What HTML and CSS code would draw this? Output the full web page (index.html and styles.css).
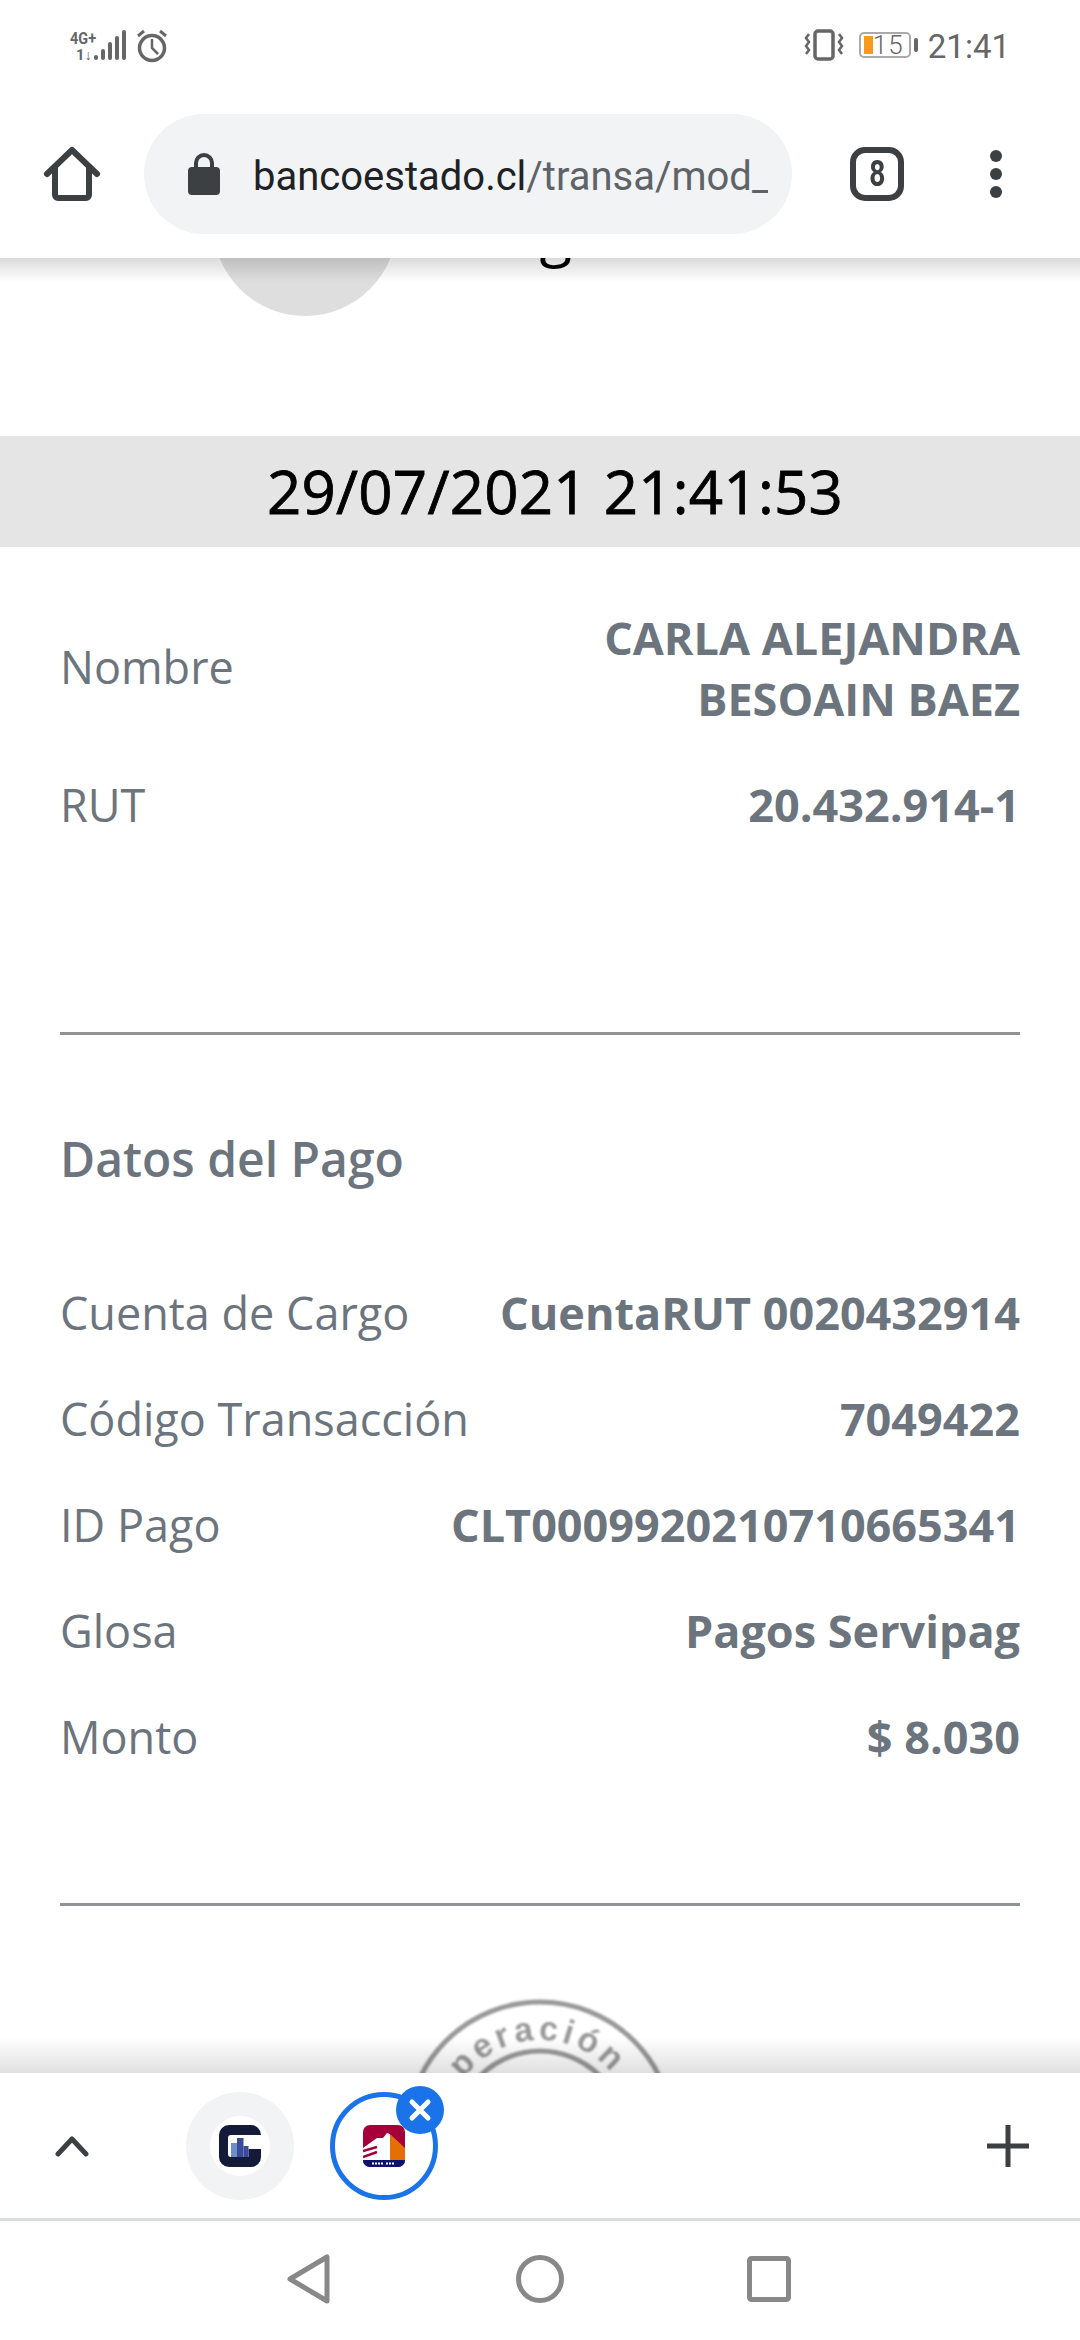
FILE: index.html
```html
<!DOCTYPE html>
<html lang="es">
<head>
    <meta charset="UTF-8">
    <meta name="viewport" content="width=device-width, initial-scale=1.0">
    <title>BancoEstado - Comprobante</title>
    <link rel="stylesheet" href="styles.css">
</head>
<body>

    <!-- Barra de estado + barra del navegador -->
    <header class="browser-top">
        <div class="status-bar">
            <div class="status-left">
                <svg class="icon-signal" width="60" height="32" viewBox="0 0 60 32">
                    <text x="2" y="15" class="net-text" textLength="26" lengthAdjust="spacingAndGlyphs">4G+</text>
                    <text x="8" y="31" class="net-text small" textLength="16" lengthAdjust="spacingAndGlyphs">1↓</text>
                    <g fill="#666">
                        <rect x="26" y="26" width="4" height="5" rx="2"/>
                        <rect x="33" y="20" width="4" height="11" rx="2"/>
                        <rect x="40" y="13" width="4" height="18" rx="2"/>
                        <rect x="47" y="7" width="4" height="24" rx="2"/>
                        <rect x="54" y="1" width="4" height="30" rx="2"/>
                    </g>
                </svg>
                <svg width="32" height="34" viewBox="0 0 32 34" fill="none" stroke="#666">
                    <circle cx="16" cy="19" r="12.5" stroke-width="3.5"/>
                    <path d="M16 10v9l6 6" stroke-width="2.5"/>
                    <path d="M2 7l6-5M30 7l-6-5" stroke-width="3"/>
                </svg>
            </div>
            <div class="status-right">
                <svg width="40" height="32" viewBox="0 0 40 32" fill="none" stroke="#666">
                    <rect x="11" y="2" width="18" height="28" rx="3" stroke-width="3.5"/>
                    <path d="M5 5l-3 4 3 4-3 4 3 4-3 4M35 5l3 4-3 4 3 4-3 4 3 4" stroke-width="2.5"/>
                </svg>
                <div class="battery">
                    <span class="battery-level"></span>
                    <span class="battery-num">15</span>
                </div>
                <span class="battery-tip"></span>
                <span class="clock">21:41</span>
            </div>
        </div>
        <div class="toolbar">
            <svg class="icon-home" width="60" height="60" viewBox="0 0 60 60" fill="none" stroke="#3c4043" stroke-width="6" stroke-linecap="round" stroke-linejoin="round">
                <path d="M5 30L30 6l25 24"/>
                <path d="M13 24v27a3 3 0 0 0 3 3h28a3 3 0 0 0 3-3V24"/>
            </svg>
            <div class="url-bar">
                <svg width="32" height="42" viewBox="0 0 32 42">
                    <path d="M8 16V10a8 8 0 0 1 16 0v6" fill="none" stroke="#3c4043" stroke-width="4"/>
                    <rect x="0" y="14" width="32" height="28" rx="4" fill="#3c4043"/>
                </svg>
                <div class="url-text"><span class="url-host">bancoestado.cl</span><span class="url-path">/transa/mod_</span></div>
            </div>
            <div class="tab-count"><span>8</span></div>
            <svg class="icon-menu" width="12" height="48" viewBox="0 0 12 48" fill="#3c4043">
                <circle cx="6" cy="6" r="6"/>
                <circle cx="6" cy="24" r="6"/>
                <circle cx="6" cy="42" r="6"/>
            </svg>
        </div>
    </header>

    <!-- Contenido de la pagina -->
    <main class="page">
        <div class="hero">
            <div class="hero-circle"></div>
            <div class="hero-title">Pago</div>
        </div>

        <div class="date-band">29/07/2021 21:41:53</div>

        <section class="section first">
            <div class="row">
                <span class="label lifted">Nombre</span>
                <span class="value">CARLA ALEJANDRA<br>BESOAIN BAEZ</span>
            </div>
            <div class="row">
                <span class="label">RUT</span>
                <span class="value">20.432.914-1</span>
            </div>
        </section>

        <hr class="divider gap-large">

        <section class="section second">
            <h2>Datos del Pago</h2>
            <div class="row">
                <span class="label">Cuenta de Cargo</span>
                <span class="value">CuentaRUT 0020432914</span>
            </div>
            <div class="row">
                <span class="label">Código Transacción</span>
                <span class="value">7049422</span>
            </div>
            <div class="row">
                <span class="label">ID Pago</span>
                <span class="value">CLT0009920210710665341</span>
            </div>
            <div class="row">
                <span class="label">Glosa</span>
                <span class="value">Pagos Servipag</span>
            </div>
            <div class="row">
                <span class="label">Monto</span>
                <span class="value">$ 8.030</span>
            </div>
        </section>

        <hr class="divider gap-small">

        <svg class="stamp" width="276" height="276" viewBox="0 0 276 276" fill="none" stroke="#999">
            <defs>
                <path id="stampArc" d="M43 138a95 95 0 0 1 190 0"/>
            </defs>
            <circle cx="138" cy="138" r="133" stroke-width="5"/>
            <circle cx="138" cy="138" r="84" stroke-width="5"/>
            <text class="stamp-text"><textPath href="#stampArc" startOffset="44%" text-anchor="middle">Operación</textPath></text>
        </svg>
    </main>

    <!-- Pestañas -->
    <div class="tab-strip">
        <svg class="icon-chevron" width="36" height="22" viewBox="0 0 36 22" fill="none" stroke="#3c4043" stroke-width="5" stroke-linecap="round" stroke-linejoin="round">
            <path d="M4 19L18 4l14 15"/>
        </svg>
        <div class="tab">
            <span class="tab-inner">
                <svg width="42" height="42" viewBox="0 0 42 42">
                    <rect width="42" height="42" rx="10" fill="#141a3a"/>
                    <path d="M42 10H12a3 3 0 0 0-3 3v16a3 3 0 0 0 3 3h17.500V24H42z" fill="#fff"/>
                    <rect x="12" y="18" width="6" height="14" fill="#6b8fc9"/>
                    <rect x="18" y="13" width="6.500" height="19" fill="#3c4a9a"/>
                    <rect x="24.500" y="21" width="5" height="11" fill="#3c4a9a"/>
                </svg>
            </span>
        </div>
        <div class="tab active">
            <svg width="42" height="42" viewBox="0 0 42 42">
                <rect width="42" height="42" rx="7" fill="#a5003a"/>
                <path d="M27 9l15 14v13H27z" fill="#e36f05"/>
                <path d="M27 9v27H0V23l14-10h6l4-5z" fill="#fff"/>
                <path d="M0 26l14-4M0 32l14-5" stroke="#a5003a" stroke-width="2.500"/>
                <path d="M0 35h42a7 7 0 0 1-7 7H7a7 7 0 0 1-7-7z" fill="#0c1470"/>
                <path d="M9 38.500h11M23 38.500h9" stroke="#fff" stroke-width="2" stroke-dasharray="2 1"/>
            </svg>
            <span class="tab-close">
                <svg width="24" height="24" viewBox="0 0 24 24" fill="none" stroke="#fff" stroke-width="5" stroke-linecap="round">
                    <path d="M4 4l16 16M20 4L4 20"/>
                </svg>
            </span>
        </div>
        <svg class="icon-plus" width="42" height="42" viewBox="0 0 42 42" fill="#3c4043">
            <rect x="18.500" y="0" width="5" height="42"/>
            <rect x="0" y="18.500" width="42" height="5"/>
        </svg>
    </div>

    <!-- Navegacion de Android -->
    <nav class="nav-bar">
        <svg class="nav-back" width="44" height="50" viewBox="0 0 44 50" fill="none" stroke="#888" stroke-width="5" stroke-linejoin="round">
            <path d="M40 3v44L3 25z"/>
        </svg>
        <svg class="nav-home" width="48" height="48" viewBox="0 0 48 48" fill="none" stroke="#888" stroke-width="5">
            <circle cx="24" cy="24" r="21.500"/>
        </svg>
        <svg class="nav-recent" width="44" height="46" viewBox="0 0 44 46" fill="none" stroke="#888" stroke-width="5" stroke-linejoin="round">
            <rect x="2.500" y="2.500" width="39" height="41" rx="2"/>
        </svg>
    </nav>

</body>
</html>
```

FILE: styles.css
```css
* {
    box-sizing: border-box;
}

html, body {
    margin: 0;
    padding: 0;
}

body {
    width: 1080px;
    height: 2340px;
    overflow: hidden;
    display: flex;
    flex-direction: column;
    background-color: #fff;
    font-family: "Open Sans", sans-serif;
}

/* Barra superior */
.browser-top {
    height: 258px;
    background-color: #fff;
    flex-shrink: 0;
}

.status-bar {
    height: 114px;
    display: flex;
    justify-content: space-between;
    padding: 29px 70px 0 68px;
}

.status-left,
.status-right {
    display: flex;
    align-items: flex-start;
}

.status-left {
    gap: 8px;
}

.net-text {
    font-family: Roboto, sans-serif;
    font-weight: 700;
    font-size: 17px;
    fill: #666;
}

.net-text.small {
    font-size: 14px;
}

.status-right {
    color: #666;
}

.battery {
    width: 52px;
    height: 26px;
    margin: 3px 0 0 15px;
    border: 2px solid #aaa;
    border-radius: 5px;
    display: flex;
    align-items: center;
    padding-left: 3px;
}

.battery-level {
    width: 9px;
    height: 18px;
    background-color: #f89a1c;
}

.battery-num {
    font-family: Roboto, sans-serif;
    font-size: 26px;
    line-height: 22px;
    letter-spacing: 1px;
    font-weight: 300;
}

.battery-tip {
    width: 4px;
    height: 14px;
    margin: 9px 0 0 3px;
    background-color: #666;
    border-radius: 2px;
}

.clock {
    font-family: Roboto, sans-serif;
    font-size: 33px;
    line-height: 36px;
    margin-left: 10px;
}

.toolbar {
    height: 144px;
    display: flex;
    align-items: flex-start;
    padding-left: 42px;
}

.icon-home {
    margin-top: 30px;
}

.url-bar {
    width: 648px;
    height: 120px;
    margin-left: 42px;
    border-radius: 60px;
    background-color: #f1f3f4;
    display: flex;
    align-items: center;
    padding-left: 44px;
}

.url-text {
    width: 515px;
    margin-left: 33px;
    padding-top: 5px;
    overflow: hidden;
    white-space: nowrap;
    font-family: Roboto, sans-serif;
    font-size: 40px;
}

.url-host {
    color: #202124;
}

.url-path {
    color: #5f6368;
}

.tab-count {
    width: 54px;
    height: 54px;
    margin: 33px 0 0 58px;
    border: 6px solid #3c4043;
    border-radius: 15px;
    display: flex;
    align-items: center;
    justify-content: center;
    font-family: Roboto, sans-serif;
    font-weight: 700;
    font-size: 36px;
    line-height: 36px;
    color: #3c4043;
}

.tab-count span {
    display: inline-block;
    transform: scaleX(0.78);
}

.icon-menu {
    margin: 36px 0 0 86px;
}

/* Pagina */
.page {
    flex: 1;
    min-height: 0;
    position: relative;
    overflow: hidden;
    background-color: #fff;
}

.page::before,
.page::after {
    content: "";
    position: absolute;
    left: 0;
    width: 100%;
    z-index: 2;
}

.page::before {
    top: 0;
    height: 24px;
    background: linear-gradient(rgba(0, 0, 0, 0.14), rgba(0, 0, 0, 0));
}

.page::after {
    bottom: 0;
    height: 36px;
    background: linear-gradient(rgba(0, 0, 0, 0), rgba(0, 0, 0, 0.12));
}

.hero {
    height: 178px;
    display: flex;
    align-items: flex-start;
    padding-left: 213px;
}

.hero-circle {
    width: 184px;
    height: 184px;
    margin-top: -126px;
    border-radius: 50%;
    background-color: #dedede;
    flex-shrink: 0;
}

.hero-title {
    margin: -69px 0 0 73px;
    font-size: 60px;
    line-height: 87px;
    color: #000;
}

.date-band {
    height: 111px;
    background-color: #e5e5e5;
    color: #000;
    font-size: 60px;
    line-height: 111px;
    letter-spacing: 0.25px;
    -webkit-text-stroke: 0.8px #000;
    text-align: center;
    padding-left: 30px;
}

.section {
    padding: 0 60px;
}

.section.first {
    padding-top: 60px;
}

.section.second {
    padding-top: 93px;
}

.section h2 {
    margin: 0 0 93px;
    font-size: 48px;
    font-weight: 600;
    line-height: 61px;
    color: #6c757d;
}

.row {
    display: flex;
    justify-content: space-between;
    align-items: center;
    margin-bottom: 45px;
    font-size: 45px;
    line-height: 61px;
    color: #6c757d;
}

.label.lifted {
    padding-bottom: 3px;
}

.value {
    font-weight: 700;
    text-align: right;
}

.divider {
    height: 3px;
    margin: 0 60px;
    border: none;
    background-color: #8f9396;
}

.divider.gap-large {
    margin-top: 197px;
}

.divider.gap-small {
    margin-top: 136px;
}

.stamp {
    display: block;
    margin: 91px auto 0;
    filter: blur(0.8px);
}

.stamp-text {
    font-family: "Liberation Sans", sans-serif;
    font-weight: 700;
    font-size: 34px;
    letter-spacing: 4px;
    fill: #999;
    stroke: none;
}

/* Pestañas */
.tab-strip {
    height: 145px;
    flex-shrink: 0;
    display: flex;
    align-items: center;
    padding: 0 51px 0 54px;
    background-color: #fff;
}

.icon-chevron {
    margin-right: 96px;
}

.tab {
    width: 108px;
    height: 108px;
    border-radius: 50%;
    background-color: #f1f3f4;
    display: flex;
    align-items: center;
    justify-content: center;
    position: relative;
    margin-right: 36px;
}

.tab-inner {
    width: 60px;
    height: 60px;
    border-radius: 50%;
    background-color: #fff;
    display: flex;
    align-items: center;
    justify-content: center;
}

.tab.active {
    background-color: #fff;
    border: 5px solid #1a73e8;
}

.tab-close {
    position: absolute;
    top: -11px;
    right: -11px;
    width: 48px;
    height: 48px;
    border-radius: 50%;
    background-color: #1a73e8;
    display: flex;
    align-items: center;
    justify-content: center;
}

.icon-plus {
    margin-left: auto;
}

/* Navegacion */
.nav-bar {
    height: 122px;
    flex-shrink: 0;
    border-top: 3px solid #dadce0;
    background-color: #fff;
    display: flex;
    align-items: flex-start;
    padding: 33px 0 0 287px;
}

.nav-home {
    margin-left: 185px;
    margin-top: 1px;
}

.nav-recent {
    margin-left: 183px;
    margin-top: 2px;
}
```
